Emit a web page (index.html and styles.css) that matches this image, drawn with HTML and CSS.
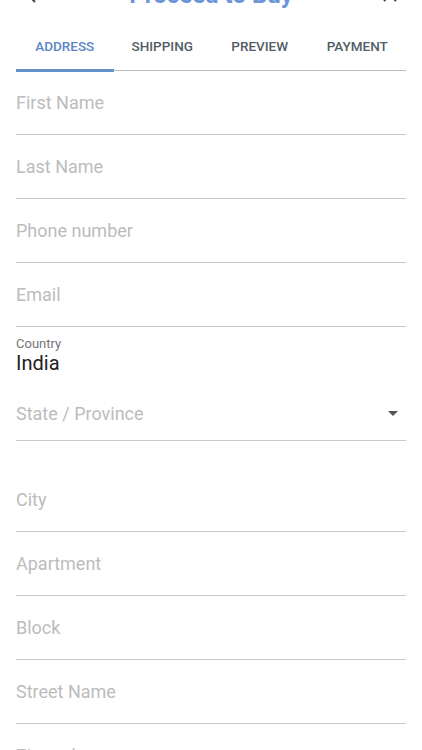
FILE: index.html
```html
<!DOCTYPE html>
<html lang="en">
<head>
    <meta charset="UTF-8">
    <meta name="viewport" content="width=device-width, initial-scale=1.0">
    <title>Proceed to Buy</title>
    <link rel="stylesheet" href="styles.css">
</head>
<body>
    <header class="topbar">
        <svg class="icon" width="24" height="24" viewBox="0 0 24 24">
            <path d="M15 5 L8 12 L15 19" fill="none" stroke="#444" stroke-width="2"/>
        </svg>
        <h1 class="title">Proceed to Buy</h1>
        <svg class="icon" width="24" height="24" viewBox="0 0 24 24">
            <path d="M6 6 L18 18 M18 6 L6 18" fill="none" stroke="#444" stroke-width="2"/>
        </svg>
    </header>

    <nav class="tabs">
        <div class="tab active">Address</div>
        <div class="tab">Shipping</div>
        <div class="tab">Preview</div>
        <div class="tab">Payment</div>
    </nav>

    <form class="form">
        <div class="field"><span class="placeholder">First Name</span></div>
        <div class="field"><span class="placeholder">Last Name</span></div>
        <div class="field"><span class="placeholder">Phone number</span></div>
        <div class="field"><span class="placeholder">Email</span></div>

        <div class="country">
            <div class="country-label">Country</div>
            <div class="country-value">India</div>
        </div>

        <div class="field select">
            <span class="placeholder">State / Province</span>
            <svg width="10" height="5" viewBox="0 0 10 5"><path d="M0 0 L10 0 L5 5 Z" fill="#555"/></svg>
        </div>

        <div class="field spaced"><span class="placeholder">City</span></div>
        <div class="field"><span class="placeholder">Apartment</span></div>
        <div class="field"><span class="placeholder">Block</span></div>
        <div class="field"><span class="placeholder">Street Name</span></div>
        <div class="field"><span class="placeholder">Zip code</span></div>
    </form>
</body>
</html>
```

FILE: styles.css
```css
body {
    font-family: Roboto, "Noto Sans", sans-serif;
    background-color: #fff;
    margin: 0;
    padding: 0 16px;
    overflow: hidden;
}

.topbar {
    display: flex;
    align-items: center;
    justify-content: space-between;
    height: 36px;
    margin-top: -23px;
    padding: 0 4px;
}

.title {
    margin: 0;
    font-size: 24px;
    font-weight: 700;
    color: #6b95d6;
}

.tabs {
    display: grid;
    grid-template-columns: repeat(4, 1fr);
    border-bottom: 1px solid #b8bfc6;
    margin-top: 22px;
}

.tab {
    text-align: center;
    text-transform: uppercase;
    font-size: 13.5px;
    font-weight: 500;
    color: #535d66;
    padding: 3px 0 15px;
    border-bottom: 3px solid transparent;
    margin-bottom: -2px;
}

.tab.active {
    color: #5b86c6;
    border-bottom-color: #6790cf;
}

.field {
    display: flex;
    align-items: center;
    justify-content: space-between;
    height: 63px;
    border-bottom: 1px solid #c9c9c9;
}

.field.select {
    box-sizing: border-box;
    height: 66px;
    padding-top: 12px;
}

.field.select svg {
    margin-right: 8px;
}

.field.spaced {
    margin-top: 27px;
}

.placeholder {
    font-size: 18px;
    color: #bcbcbc;
    padding-bottom: 1px;
}

.country {
    padding-top: 10px;
}

.country-label {
    font-size: 13px;
    color: #757575;
    line-height: 14px;
}

.country-value {
    font-size: 20px;
    color: #212121;
    line-height: 24px;
}
```
